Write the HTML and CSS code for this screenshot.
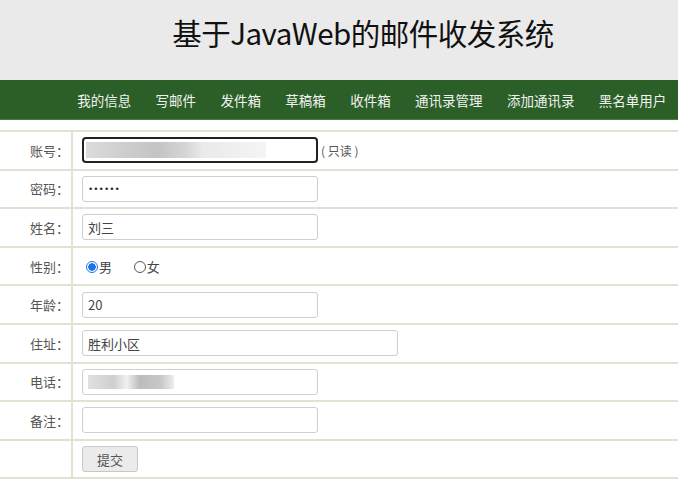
FILE: index.html
```html
<!DOCTYPE html>
<html lang="zh">
<head>
<meta charset="utf-8">
<title>基于JavaWeb的邮件收发系统</title>
<link rel="stylesheet" href="styles.css">
</head>
<body>
<header class="header">
  <h1 class="title">基于JavaWeb的邮件收发系统</h1>
</header>
<nav class="nav">
  <a class="nav-item">我的信息</a>
  <a class="nav-item">写邮件</a>
  <a class="nav-item">发件箱</a>
  <a class="nav-item">草稿箱</a>
  <a class="nav-item">收件箱</a>
  <a class="nav-item">通讯录管理</a>
  <a class="nav-item">添加通讯录</a>
  <a class="nav-item">黑名单用户</a>
</nav>
<main class="content">
  <table class="form-table">
    <tr>
      <td class="label">账号：</td>
      <td class="field"><span class="input input-readonly"><span class="blur blur-a"></span></span><span class="note">( 只读 )</span></td>
    </tr>
    <tr>
      <td class="label">密码：</td>
      <td class="field"><span class="input"><span class="dots">••••••</span></span></td>
    </tr>
    <tr>
      <td class="label">姓名：</td>
      <td class="field"><span class="input">刘三</span></td>
    </tr>
    <tr>
      <td class="label">性别：</td>
      <td class="field">
        <span class="radio radio-on"></span><span class="radio-text">男</span>
        <span class="radio radio-off"></span><span class="radio-text">女</span>
      </td>
    </tr>
    <tr>
      <td class="label">年龄：</td>
      <td class="field"><span class="input">20</span></td>
    </tr>
    <tr>
      <td class="label">住址：</td>
      <td class="field"><span class="input input-wide">胜利小区</span></td>
    </tr>
    <tr>
      <td class="label">电话：</td>
      <td class="field"><span class="input"><span class="blur blur-b"></span></span></td>
    </tr>
    <tr>
      <td class="label">备注：</td>
      <td class="field"><span class="input"></span></td>
    </tr>
    <tr>
      <td class="label"></td>
      <td class="field"><span class="button">提交</span></td>
    </tr>
  </table>
</main>
</body>
</html>
```
FILE: styles.css
```css
* { box-sizing: border-box; }
body {
  margin: 0;
  background: #ffffff;
  font-family: "Noto Sans CJK SC", "Liberation Sans", sans-serif;
  color: #333;
}
.header {
  height: 80px;
  background: #eaeaea;
  display: flex;
  align-items: center;
  justify-content: center;
}
.title {
  margin: 0 0 16px 48px;
  font-size: 29.5px;
  font-weight: normal;
  color: #111;
  letter-spacing: -0.5px;
}
.nav {
  height: 40px;
  background: #2b5f27;
  border-bottom: 1px solid #4a7a45;
  display: flex;
  align-items: center;
  padding-left: 65px;
}
.nav-item {
  color: #f2f2f2;
  font-size: 13.5px;
  padding: 0 12.2px;
  white-space: nowrap;
}
.content {
  padding-top: 10px;
}
.form-table {
  width: 100%;
  border-collapse: collapse;
}
.form-table td {
  border: 2px solid #e2e2d2;
  height: 38.6px;
  padding: 0;
}
.form-table tr td:first-child { border-left: none; }
.form-table tr td:last-child { border-right: none; }
.label {
  width: 72px;
  text-align: right;
  padding-right: 2px !important;
  font-size: 13px;
  color: #555;
}
.field {
  padding-left: 9px !important;
  font-size: 12px;
  color: #444;
}
.input {
  display: inline-flex;
  align-items: center;
  vertical-align: middle;
  width: 236px;
  height: 26px;
  border: 1px solid #cfcfcf;
  border-radius: 3px;
  padding: 0 5px;
  font-size: 13px;
  color: #444;
  background: #fff;
}
.input-wide { width: 316px; }
.input-readonly {
  border: 2px solid #222;
  border-radius: 4px;
  padding: 0 2px;
}
.dots {
  font-family: "DejaVu Sans", sans-serif;
  font-size: 9px;
  letter-spacing: 0;
  color: #333;
}
.note {
  margin-left: 3px;
  vertical-align: middle;
  font-size: 12px;
  color: #555;
}
.blur {
  display: block;
  height: 16px;
}
.blur-a {
  width: 180px;
  background: linear-gradient(90deg, #d8d8d8 0, #c9c9c9 20%, #bdbdbd 40%, #d0d0d0 55%, #e8e8e8 65%, #f3f3f3 100%);
  opacity: 0.9;
}
.blur-b {
  width: 86px;
  height: 14px;
  background: linear-gradient(90deg, #e0e0e0 0, #cfcfcf 30%, #f0f0f0 45%, #bcbcbc 60%, #c8c8c8 85%, #eeeeee 100%);
}
.radio {
  display: inline-block;
  width: 12px;
  height: 12px;
  border-radius: 50%;
  vertical-align: middle;
  margin: 0 1px 2px 4px;
}
.radio-on {
  border: 1px solid #1a73e8;
  background: radial-gradient(circle, #1a73e8 0, #1a73e8 3.5px, #fff 4px);
}
.radio-off {
  border: 1px solid #555;
  margin-left: 19px;
}
.radio-text {
  font-size: 13px;
  color: #444;
}
.button {
  display: inline-flex;
  align-items: center;
  justify-content: center;
  vertical-align: middle;
  width: 56px;
  height: 26px;
  border: 1px solid #c8c8c8;
  border-radius: 3px;
  background: #ebebeb;
  font-size: 13px;
  color: #555;
}
```
